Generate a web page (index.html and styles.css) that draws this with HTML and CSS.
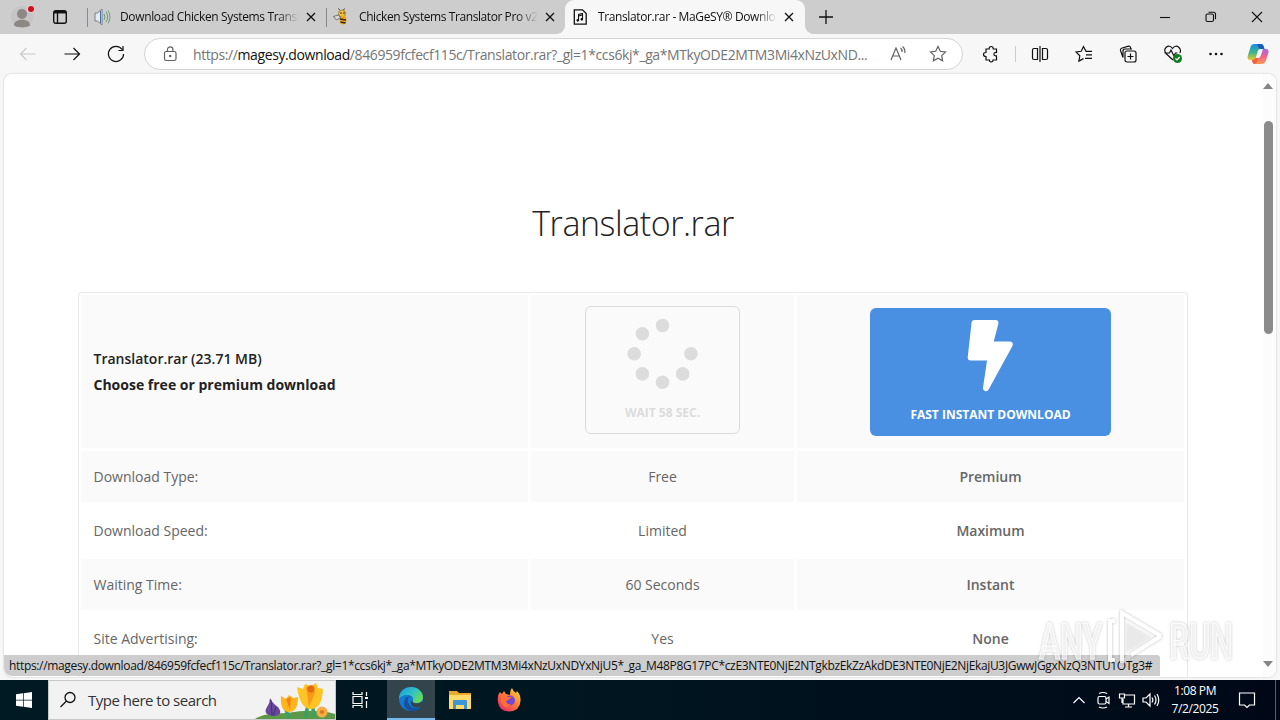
FILE: index.html
```html
<!DOCTYPE html>
<html lang="en">
<head>
<meta charset="utf-8">
<title>Translator.rar</title>
<link rel="stylesheet" href="styles.css">
</head>
<body>
<div class="tabbar">
  <div class="avatar"><svg width="28" height="28" viewBox="0 0 28 28"><circle cx="14" cy="14" r="11" fill="#c5c5c5"/><circle cx="14" cy="11" r="5" fill="#8c8884"/><path d="M6 22c0-7 16-7 16 0 0 3-16 3-16 0z" fill="#8c8884"/><circle cx="23" cy="6" r="4" fill="#e6cccc"/><circle cx="23" cy="6" r="3" fill="#d00f22"/></svg></div>
  <div class="workspace"><svg width="16" height="16" viewBox="0 0 16 16" fill="none" stroke="#111" stroke-width="1.4"><rect x="1.700" y="1.700" width="12.600" height="12.600" rx="2"/><path d="M2 3.200h12" stroke-width="2.500"/><path d="M5.500 4v10"/></svg></div>
  <div class="tab tab-first">
    <svg width="18" height="18" viewBox="0 0 18 18" fill="none"><path d="M2 5h2.500l4.500-4v16l-4.500-4H2z" fill="#e3edf2" stroke="#7a7f88"/><path d="M7.500 3v12" stroke="#4b6da7"/><path d="M11 6q2 3 0 6M13 4q3.500 5 0 10M15 2.500q4 6.500 0 13" stroke="#65a17a"/></svg>
    <span class="title title-one">Download Chicken Systems Transl</span>
    <svg class="close" width="12" height="12" viewBox="0 0 12 12"><path d="M2 2l8 8M10 2l-8 8"/></svg>
  </div>
  <div class="tab">
    <svg width="18" height="18" viewBox="0 0 18 18"><path d="M8 2L6 .5M11 2l2-1.500" stroke="#555"/><circle cx="10" cy="5.500" r="3.500" fill="#f3c236" stroke="#856019" stroke-width=".6"/><ellipse cx="11" cy="12" rx="3.500" ry="4.500" fill="#f0a51c"/><path d="M8 11l6 1M8.500 14l5 1" stroke="#332a21" stroke-width="1.500"/><path d="M1.500 8.500l5-1.500 2 2.500-4 2.500z" fill="#d8dce0" stroke="#4b4439" stroke-width=".7"/><circle cx="9" cy="5" r=".8" fill="#222"/><circle cx="12" cy="5" r=".8" fill="#222"/></svg>
    <span class="title title-two">Chicken Systems Translator Pro v2</span>
    <svg class="close" width="12" height="12" viewBox="0 0 12 12"><path d="M2 2l8 8M10 2l-8 8"/></svg>
  </div>
  <div class="tab tab-active">
    <svg width="18" height="18" viewBox="0 0 18 18" fill="none" stroke="#111" stroke-width="1.300"><path d="M3.300 1.800h8.200l3.700 3.700v10.700H3.300z"/><path d="M7.500 12.300V6.500l4-1v6M7.500 8l4-1" stroke-width="1.100"/><circle cx="6.800" cy="12.300" r=".7"/><circle cx="10.800" cy="11.300" r=".7"/></svg>
    <span class="title title-three">Translator.rar - MaGeSY® Downlo</span>
    <svg class="close" width="12" height="12" viewBox="0 0 12 12"><path d="M2 2l8 8M10 2l-8 8"/></svg>
  </div>
  <div class="newtab"><svg width="16" height="16" viewBox="0 0 16 16" stroke="#111" stroke-width="1.300"><path d="M8 1v14M1 8h14"/></svg></div>
  <div class="window-controls">
    <svg width="12" height="12" viewBox="0 0 12 12"><path d="M1 6.500h10"/></svg>
    <svg width="12" height="12" viewBox="0 0 12 12"><rect x="1" y="3" width="7.500" height="7.500" rx="1.500"/><path d="M3.500 1.200h5q2 0 2 2v5"/></svg>
    <svg width="12" height="12" viewBox="0 0 12 12"><path d="M1 1l10 10M11 1L1 11"/></svg>
  </div>
</div>
<div class="toolbar">
  <div class="tool faded"><svg width="20" height="20" viewBox="0 0 20 20"><path d="M17.500 10H2.500M8.500 4l-6 6 6 6"/></svg></div>
  <div class="tool"><svg width="20" height="20" viewBox="0 0 20 20"><path d="M2.500 10h15M11.500 4l6 6-6 6"/></svg></div>
  <div class="tool"><svg width="20" height="20" viewBox="0 0 20 20"><path d="M16.200 5.500A7.600 7.600 0 1 0 17.600 10M17 2v4.500h-4.500"/></svg></div>
  <div class="address">
    <svg class="grey" width="16" height="18" viewBox="0 0 16 18"><rect x="2.500" y="6.500" width="11.500" height="9" rx="1.800"/><path d="M5.500 6.500V4.500a2.700 2.700 0 0 1 5.400 0v2"/><circle cx="8.200" cy="11" r=".6" fill="#555"/></svg>
    <span class="url">https://<b>magesy.download</b>/846959fcfecf115c/Translator.rar?_gl=1*ccs6kj*_ga*MTkyODE2MTM3Mi4xNzUxND...</span>
    <svg class="grey read" width="18" height="18" viewBox="0 0 18 18"><path d="M2 15L7 3l5 12M3.800 11h6.500M11.500 3q2 1.500 1.500 4M13.500 1.500q3 2.500 2.300 6.500"/></svg>
    <svg class="grey" width="18" height="18" viewBox="0 0 18 18"><path d="M9 1.500l2.300 4.800 5.200.7-3.800 3.600.9 5.200L9 13.300l-4.600 2.500.9-5.200L1.500 7l5.200-.7z"/></svg>
  </div>
  <div class="tool tool-puzzle"><svg width="18" height="18" viewBox="0 0 18 18"><path d="M4 4h3.200q-.2-2.500 2-2.500t2 2.500h3.300v3.500q-2.500-.3-2.500 1.700t2.500 1.700V15h-3.500q.2 1.800-1.800 1.800T7.500 15H4v-3.500Q1.500 11.500 1.500 9.500t2.500-2z"/></svg></div>
  <i class="divider"></i>
  <div class="tool"><svg width="18" height="18" viewBox="0 0 18 18"><path d="M6.500 3.500H3q-1.500 0-1.500 1.500v8Q1.500 14.500 3 14.500h3.500zM11.500 3.500H15q1.500 0 1.500 1.500v8q0 1.500-1.500 1.500h-3.500zM9 1v16"/></svg></div>
  <div class="tool"><svg width="18" height="18" viewBox="0 0 18 18"><path d="M12 6.300h-1L8.500 1.500 6.200 6.300 1 7l3.800 3.800-.9 5.300 4.600-2.500M11 6.300h6M11 9.800h6M10 13.300h7"/></svg></div>
  <div class="tool"><svg width="18" height="18" viewBox="0 0 18 18"><rect x="6" y="6" width="11" height="11" rx="2"/><path d="M11.500 8.500v6M8.500 11.500h6M4 12.500l-2.500-7q-.4-1.700 1-2.300l7-2q1.500-.3 2 1.200l.3 1.200M4 12.500V6q0-2 2-2h7"/></svg></div>
  <div class="tool tool-heart"><svg width="20" height="20" viewBox="0 0 20 20"><path d="M10 16L3 9.500Q.5 6 3 3.500q3.500-3 6.500 1 3-4 6.500-1 2.500 2.500.8 5.500M1.500 9h5L8 6l3 6 1.500-3h2"/><circle cx="14.500" cy="14.500" r="4.500" fill="#107c20" stroke="none"/><path d="M12.500 14.500l1.500 1.500 2.700-3" stroke="#fff"/></svg></div>
  <div class="tool"><svg width="16" height="16" viewBox="0 0 16 16"><g fill="#111" stroke="none"><circle cx="2.500" cy="8" r="1.300"/><circle cx="8" cy="8" r="1.300"/><circle cx="13.500" cy="8" r="1.300"/></g></svg></div>
  <div class="copilot"><svg width="24" height="24" viewBox="0 0 24 24"><defs><linearGradient id="ca" x2="0" y2="1"><stop stop-color="#178ee6"/><stop offset=".55" stop-color="#40b785"/><stop offset="1" stop-color="#f1c928"/></linearGradient><linearGradient id="cb" x2="0" y2="1"><stop stop-color="#a964e8"/><stop offset=".5" stop-color="#ef6390"/><stop offset="1" stop-color="#ff984c"/></linearGradient></defs><path d="M8 2h7q2 0 2.500 2l1 3h-4q-2 0-2.700 2l-2 7q-.8 2-3 2H4q-3 0-2.300-4L4.500 5Q5.500 2 8 2z" fill="url(#ca)"/><path d="M11 2h4q2 0 2.500 2l1 3H15q-2 0-2.700-2z" fill="#185abd"/><path d="M17 7h3q3.200 0 2.400 4l-2.700 8Q18.600 22 16 22H9q-2 0-2.500-2l-.8-2q3 0 3.800-2h2.500q2 0 2.600-2z" fill="url(#cb)"/><path d="M6 18q3 0 3.700-2h2.500l-1.200 4q-.8 2-3 2-1.500-.5-2-4z" fill="#f1633d"/></svg></div>
</div>
<div class="viewport">
  <div class="page">
    <main class="content">
      <h1>Translator.rar</h1>
      <div class="compare">
        <div class="cell label head"><span class="semi">Translator.rar (23.71 MB)</span><strong>Choose free or premium download</strong></div>
        <div class="cell">
          <div class="wait"><svg width="76" height="76" viewBox="0 0 76 76" fill="#dcdcdc"><circle cx="37.500" cy="9.500" r="6.800"/><circle cx="17.400" cy="17.700" r="6.800"/><circle cx="9.200" cy="37.800" r="6.800"/><circle cx="17.400" cy="57.900" r="6.800"/><circle cx="37.500" cy="66.200" r="6.800"/><circle cx="57.700" cy="57.900" r="6.800"/><circle cx="65.900" cy="37.800" r="6.800"/></svg><span>WAIT 58 SEC.</span></div>
        </div>
        <div class="cell">
          <div class="fast"><svg width="50" height="74" viewBox="0 0 50 74"><path d="M8.500 5h21L23.800 26.500h20L20 70 24.500 39.500H4.700z" fill="#fff" stroke="#fff" stroke-width="6" stroke-linejoin="round"/></svg><span>FAST INSTANT DOWNLOAD</span></div>
        </div>
        <div class="cell label">Download Type:</div><div class="cell">Free</div><div class="cell semi">Premium</div>
        <div class="cell label white">Download Speed:</div><div class="cell white">Limited</div><div class="cell semi white">Maximum</div>
        <div class="cell label">Waiting Time:</div><div class="cell">60 Seconds</div><div class="cell semi">Instant</div>
        <div class="cell label white">Site Advertising:</div><div class="cell white">Yes</div><div class="cell semi white">None</div>
        <div class="cell label white"></div><div class="cell white"></div><div class="cell white"></div>
      </div>
    </main>
    <div class="scrollbar">
      <i class="arrow-up"></i><i class="thumb"></i><i class="arrow-down"></i>
    </div>
    <div class="status"><span>https://magesy.download/846959fcfecf115c/Translator.rar?_gl=1*ccs6kj*_ga*MTkyODE2MTM3Mi4xNzUxNDYxNjU5*_ga_M48P8G17PC*czE3NTE0NjE2NTgkbzEkZzAkdDE3NTE0NjE2NjEkajU3JGwwJGgxNzQ3NTU1OTg3#</span></div>
  </div>
</div>
<svg class="watermark" width="204" height="70" viewBox="0 0 204 70">
  <g fill="#fff" fill-opacity=".7" stroke="#fff" stroke-width="1" font-family="Roboto, sans-serif" font-weight="500" font-size="50"><text x="3" y="53" textLength="63" lengthAdjust="spacingAndGlyphs">ANY</text><text x="133" y="53" textLength="64" lengthAdjust="spacingAndGlyphs">RUN</text></g>
  <path d="M79 15h-5v39h5M125 30L86 7v50M125 30L95 49" fill="none" stroke="#fff" stroke-width="4"/>
  <path d="M86 57l9-8" fill="none" stroke="#fff" stroke-opacity=".4" stroke-width="4"/>
  <path d="M90 16v31l26-16z" fill="#ddd" fill-opacity=".3"/>
</svg>
<div class="taskbar">
  <div class="start"><svg width="16" height="16" viewBox="0 0 16 16" fill="#fff"><path d="M0 2.300l7-1v6.400H0zM7.700 1.200L16 0v7.700H7.700zM0 8.400h7v6.400l-7-1zM7.700 8.400H16V16l-8.300-1.200z"/></svg></div>
  <div class="search">
    <svg width="18" height="18" viewBox="0 0 18 18" fill="none" stroke="#111" stroke-width="1.300"><circle cx="11" cy="6.500" r="5"/><path d="M7.500 10L1.500 16"/></svg>
    <span>Type here to search</span>
    <svg class="flowers" width="80" height="38" viewBox="0 0 80 38"><path d="M0 38q8-6 32-6 28-5 48 1v5z" fill="#5d9849"/><path d="M15 17q3 6 8 9 6 8-4 9-12-1-7-9 3-4 3-9z" fill="#66479a"/><path d="M16 19l1 15M21 26l-3 9" stroke="#493078"/><path d="M34 37l-3-8M50 37l4-17M59 36l-2-17" stroke="#39a164" stroke-width="3.500"/><path d="M26 15l5 3 3-4 4 3 5-1q0 15-9 15T26 15z" fill="#ffb61c"/><path d="M31 18l5-2-1 13z" fill="#f58113"/><path d="M42 6l6 2 2-5 6 2 5-3 2 5 5 1q-1 20-12 20T42 6z" fill="#ffc323"/><path d="M51 6l6-2 3 8-6 14z" fill="#f8991b"/><circle cx="56" cy="8" r="3.500" fill="#e36914"/><circle cx="67" cy="31" r="5.500" fill="#f7ad45"/><circle cx="67" cy="31" r="2" fill="#db751b"/></svg>
  </div>
  <div class="app"><svg width="18" height="18" viewBox="0 0 18 18" fill="none" stroke="#fff" stroke-width="1.200"><path d="M2 1v2.500h9V1M2 17v-2.500h9V17M2 5.500h9v7H2zM15.500 1v4M15.500 10v7"/><path d="M14 6h3v2h-3z" fill="#fff" stroke="none"/></svg></div>
  <div class="app app-active"><svg width="26" height="26" viewBox="0 0 26 26"><defs><linearGradient id="ea" x2="1" y2=".7"><stop stop-color="#1899e0"/><stop offset=".55" stop-color="#31c4c5"/><stop offset="1" stop-color="#6bdd4b"/></linearGradient></defs><circle cx="13" cy="13" r="12" fill="#1579cf"/><path d="M1 13C1 5 7 1 13 1c7 0 12 5 12 10 0 4-3 6-7 6-3 0-4-1-3-3 1-3-2-5-6-5-4 0-7 2-8 4z" fill="url(#ea)"/><path d="M13 10q-4 1-3 6 2 6 8 6 3 0 5-1.500Q19 26 13 25 5 23 6 16q1-6 7-6z" fill="#1452a0"/><path d="M15 14q-2 3 3 3.500 4 0 6-2l1.500 1.500-1.700 3q-3 2-6 1.500Q13 21 12.500 16z" fill="#34444d"/></svg></div>
  <div class="app app-explorer"><svg width="24" height="20" viewBox="0 0 24 20"><path d="M1 1h8l2 2h12v16H1z" fill="#e9a92b"/><path d="M1 5h22v14H1z" fill="#ffda68"/><path d="M5 19v-8q0-1 1-1h12q1 0 1 1v8h-3v-4H8v4z" fill="#3d95d8"/></svg></div>
  <div class="app app-fox"><svg width="26" height="26" viewBox="0 0 26 26"><defs><linearGradient id="fa" x1="1" x2=".1" y2="1"><stop stop-color="#ffe238"/><stop offset=".5" stop-color="#ff7937"/><stop offset="1" stop-color="#e62372"/></linearGradient></defs><path d="M4 5l2 2 2-3 2 3 4 1q0-5 2-7 1 3 4 5l1-2q4 4 3.500 10-.5 10-11.500 10.500Q3 24 2 15 1 8 4 5z" fill="url(#fa)"/><circle cx="14" cy="13.500" r="5" fill="#7548d3"/><path d="M5 9q4-2 6 1h5l-4 3-2 1q1 4 5 3-4 5-8 2-3-4-2-10z" fill="#ff7031"/></svg></div>
  <div class="tray">
    <svg width="24" height="20" viewBox="0 0 24 20"><path d="M6.500 13l5.500-5.500 5.500 5.500"/></svg>
    <svg width="24" height="20" viewBox="0 0 24 20"><rect x="7" y="6.500" width="8" height="7.500" rx="1.500"/><path d="M15 9l3-2v6.500l-3-2M8 3.500q4-2 8 0M8 17q4 2 8 0"/></svg>
    <svg width="24" height="20" viewBox="0 0 24 20"><path d="M9 5h10.500v9H8V9M13.500 14v3M10 17h7M4.500 4h5v4h-5zM7 8v5"/></svg>
    <svg width="24" height="20" viewBox="0 0 24 20"><path d="M4 8h3l4-4v12l-4-4H4zM13 7.500q1.800 2.500 0 5M15.500 5.500q3 4.500 0 9M18 4q3.500 6 0 12"/></svg>
  </div>
  <div class="clock"><span>1:08 PM</span><span>7/2/2025</span></div>
  <div class="notice"><svg width="18" height="18" viewBox="0 0 18 18" fill="none" stroke="#fff" stroke-width="1.200"><path d="M1.500 2h15v12h-5L9 16.500 6.500 14h-5z"/></svg></div>
  <i class="peek"></i>
</div>
</body>
</html>
```
FILE: styles.css
```css
* { box-sizing: border-box; }
body { margin: 0; width: 1280px; height: 720px; overflow: hidden; display: flex; flex-direction: column; background: #f7f7f7; font-family: "Open Sans", "Noto Sans", sans-serif; color: #111; position: relative; }
svg { flex: none; display: block; }
.tabbar { height: 34px; flex: none; display: flex; align-items: center; background: #cdcdcd; }
.avatar { width: 44px; padding-left: 8px; }
.workspace { width: 43px; display: flex; padding-left: 8px; }
.tab { width: 239px; height: 34px; display: flex; align-items: center; padding-left: 6px; font-size: 12px; }
.tab-first, .tab-first + .tab { position: relative; }
.tab-first::before, .tab-first + .tab::before { content: ""; position: absolute; left: 0; top: 8px; width: 1px; height: 19px; background: #888; }
.tab-active { background: #f7f7f7; width: 240px; border-radius: 9px 9px 0 0; position: relative; }
.tab-active::before, .tab-active::after { content: ""; position: absolute; bottom: 0; width: 8px; height: 8px; }
.tab-active::before { left: -8px; background: radial-gradient(circle at 0 0, #cdcdcd 7.5px, #f7f7f7 8px); }
.tab-active::after { right: -8px; background: radial-gradient(circle at 100% 0, #cdcdcd 7.5px, #f7f7f7 8px); }
.title { width: 179px; margin-left: 9px; margin-right: 6px; white-space: nowrap; overflow: hidden; mask-image: linear-gradient(90deg, #000 88%, transparent); line-height: 20px; }
.title-one { letter-spacing: -.36px; }
.title-two { letter-spacing: -.42px; }
.title-three { letter-spacing: -.38px; }
.close { fill: none; stroke: #111; stroke-width: 1.3; }
.newtab { padding-left: 13px; }
.window-controls { margin-left: auto; display: flex; gap: 34px; padding-right: 17px; }
.window-controls svg { fill: none; stroke: #111; stroke-width: 1.1; }
.toolbar { height: 40px; flex: none; display: flex; align-items: center; padding-left: 6px; }
.tool { width: 44px; display: flex; justify-content: center; }
.toolbar svg { fill: none; stroke: #111; stroke-width: 1.2; }
.toolbar .faded svg { stroke: #c8c8c8; }
.address { width: 819px; height: 32px; margin-left: 6px; border: 1px solid #d4d4d4; border-radius: 16px; background: #fff; display: flex; align-items: center; padding: 0 14px 0 17px; }
.toolbar .grey { stroke: #616161; }
.url { width: 701px; flex: none; padding-left: 15px; font-size: 14px; white-space: nowrap; color: #757575; letter-spacing: -.4px; }
.url b { font-weight: 400; color: #111; }
.read { margin-left: 10px; margin-right: 22px; }
.tool-puzzle { margin-left: 6px; }
.tool-heart { padding-left: 2px; }
.divider { width: 1px; height: 16px; background: #ccc; margin: 0 2px; }
.toolbar .copilot svg { stroke: none; margin-left: 8px; }
.viewport { height: 606px; flex: none; padding: 0 4px 3px; }
.page { height: 603px; background: #fff; border-radius: 8px; overflow: hidden; position: relative; display: flex; box-shadow: 0 0 2px #bbb; }
.content { width: 1258px; padding-left: 74px; }
h1 { margin: 125px 0 0; width: 1110px; height: 48px; line-height: 48px; text-align: center; font-size: 34px; font-weight: 300; letter-spacing: -.45px; color: #222; }
.compare { margin-top: 45px; width: 1110px; border: 1px solid #e9e9e9; border-radius: 4px; padding: 2px; display: grid; grid-template-columns: 447px 263px 387px; grid-template-rows: 153px; grid-auto-rows: 51px; gap: 3px; font-size: 14px; color: #666; box-shadow: 0 0 1px #eee; }
.cell { background: #fafafa; display: flex; align-items: center; justify-content: center; }
.white { background: #fff; }
.label { justify-content: flex-start; padding-left: 12.5px; }
.head { flex-direction: column; align-items: flex-start; justify-content: center; line-height: 26px; color: #222; }
.semi { font-weight: 600; }
.wait, .fast { display: flex; flex-direction: column; align-items: center; height: 128px; border-radius: 6px; font-size: 12px; font-weight: 700; }
.wait { width: 155px; border: 1px solid #dadada; color: #dcdcdc; padding-top: 9px; margin-bottom: 3px; }
.wait span { margin-top: 12px; line-height: 18px; }
.fast { width: 241px; background: #4990e2; color: #fff; padding-top: 10px; margin-top: 1px; }
.fast span { margin-top: 13.5px; line-height: 18px; }
.scrollbar { width: 14px; background: #fcfcfc; display: flex; flex-direction: column; align-items: center; padding: 9px 2px 10px 0; }
.arrow-up { border: 5px solid transparent; border-top: 0; border-bottom: 6px solid #858585; }
.thumb { width: 9px; height: 213px; border-radius: 5px; background: #8b8b8b; margin-top: 32px; }
.arrow-down { border: 5px solid transparent; border-bottom: 0; border-top: 6px solid #858585; margin-top: auto; }
.status { position: absolute; left: 0; bottom: 1px; width: 1156px; height: 21px; border-radius: 0 3px 0 8px; background: #cdcdcd; font-size: 12px; line-height: 21px; padding-left: 5px; white-space: nowrap; letter-spacing: -.34px; }
.watermark { position: absolute; left: 1036px; top: 606px; opacity: .8; overflow: visible; filter: drop-shadow(0 0 1.5px rgba(0, 0, 0, .32)); }
.taskbar { height: 40px; flex: none; display: flex; background: linear-gradient(90deg, #001a24, #001520 50%, #000818); color: #fff; }
.start { width: 48px; display: flex; align-items: center; justify-content: center; }
.search { width: 288px; background: #f2f2f2; border: 1px solid #c8c8c8; display: flex; align-items: center; padding-left: 10px; color: #333; font-size: 15px; }
.search span { margin-left: 11px; letter-spacing: -.5px; white-space: nowrap; }
.flowers { margin-left: auto; }
.app { width: 48px; margin-right: 2px; display: flex; align-items: center; justify-content: center; }
.app + .app { margin-right: 0; }
.app-active { background: #34444d; border-bottom: 2px solid #76b9ed; }
.taskbar .app-active { margin-left: 1px; }
.app-explorer { padding-left: 2px; }
.app-fox { padding-left: 4px; }
.tray { margin-left: auto; display: flex; align-items: center; }
.tray svg { fill: none; stroke: #fff; stroke-width: 1.2; }
.clock { width: 64px; display: flex; flex-direction: column; align-items: center; font-size: 12px; line-height: 18px; padding-top: 2px; letter-spacing: -.4px; }
.notice { width: 40px; display: flex; align-items: center; justify-content: center; }
.peek { width: 1px; background: #59616a; margin: 0 4px 0 8px; }
```
